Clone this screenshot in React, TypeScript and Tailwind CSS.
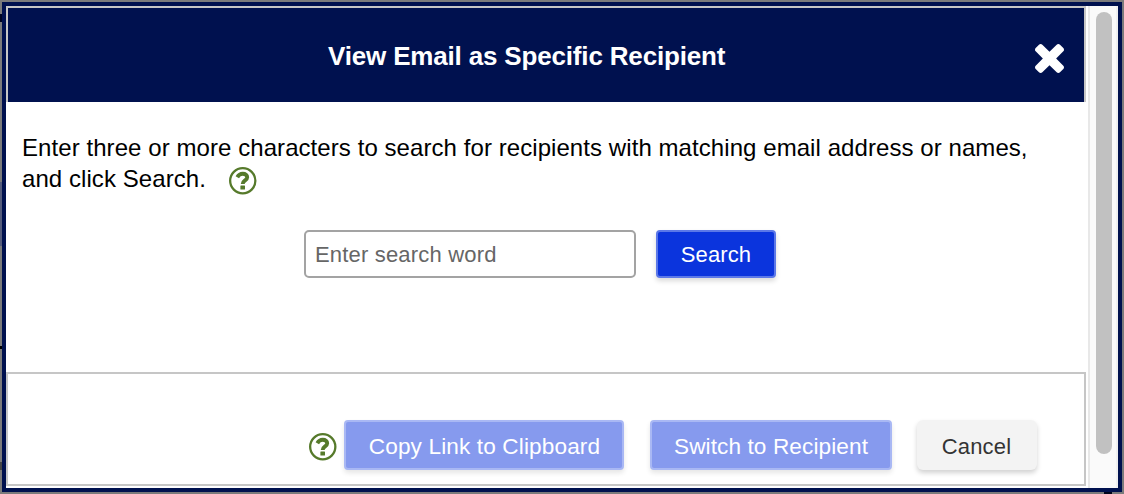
import React from "react";

function HelpIcon() {
  return (
    <svg viewBox="0 0 27.5 27.5" className="h-[27.5px] w-[27.5px] shrink-0" aria-label="Help">
      <circle cx="13.75" cy="13.75" r="12.6" fill="none" stroke="#567a2b" strokeWidth="2.3" />
      <path
        d="M8.3 10.3C9.6 7.900 11.500 6.800 13.800 6.800C16.500 6.800 18.200 8.300 18.200 10.300C18.200 13.500 13.700 13.300 13.700 17"
        fill="none"
        stroke="#567a2b"
        strokeWidth="3.9"
      />
      <rect x="11.4" y="18.4" width="4.6" height="4" rx="0.5" fill="#567a2b" />
    </svg>
  );
}

function CloseIcon() {
  return (
    <svg viewBox="302 366 1188 1188" className="h-[29px] w-[29px]" fill="white">
      <path d="M1490 1322q0 40-28 68l-136 136q-28 28-68 28t-68-28l-294-294-294 294q-28 28-68 28t-68-28l-136-136q-28-28-28-68t28-68l294-294-294-294q-28-28-28-68t28-68l136-136q28-28 68-28t68 28l294 294 294-294q28-28 68-28t68 28l136 136q28 28 28 68t-28 68l-294 294 294 294q28 28 28 68z" />
    </svg>
  );
}

export default function App() {
  return (
    <div className="flex h-[494px] w-[1124px] bg-[#7b7b7b] pr-0.5 font-['Liberation_Sans',Arial,sans-serif]">
      {/* Dimmed page showing beside the dialog */}
      <div className="flex w-0.5 flex-col">
        <div className="mt-3.5 h-2 bg-[#000524]" />
        <div className="mt-[160px] h-16 bg-[#555c7c]" />
        <div className="mt-[100px] h-[3px] bg-black" />
        <div className="mt-[113px] h-2 bg-[#454545]" />
      </div>
      <div className="flex w-[1120px] flex-col pt-0.5">
        <div className="flex h-[490px] shrink-0 border-4 border-[#00114f] bg-white">
          <div className="mr-0.5 flex w-[1080px] flex-col">
            <header className="flex h-24 items-start border-2 border-b-0 border-[#c6c6c6] bg-[#00114f]">
              <h1 className="w-[1027px] pt-8 pl-[320px] text-[26px] leading-8 font-bold tracking-[-0.17px] whitespace-nowrap text-white">
                View Email as Specific Recipient
              </h1>
              <button className="mt-9" aria-label="Close">
                <CloseIcon />
              </button>
            </header>
            <main className="flex h-[270px] flex-col pt-[30px] pl-4 text-black">
              <p className="text-2xl leading-8 tracking-[0.07px] whitespace-nowrap">
                Enter three or more characters to search for recipients with matching email address or names,
              </p>
              <div className="flex h-8 items-start">
                <p className="-mt-px w-[207px] text-2xl leading-8 tracking-[0.07px] whitespace-nowrap">and click Search.</p>
                <div className="pt-[3px]">
                  <HelpIcon />
                </div>
              </div>
              <div className="mt-[34px] ml-[282px] flex gap-5">
                <input
                  placeholder="Enter search word"
                  className="h-12 w-[332px] rounded-[5px] border-2 border-[#a3a3a3] bg-white px-[9px] pt-0.5 text-[22px] tracking-[0.18px] placeholder:text-[#666]"
                />
                <button className="h-12 w-[120px] rounded-[4px] border-2 border-[#5c78e8] bg-[#0b34dd] text-[22px] tracking-[0.1px] text-white shadow-[0_3px_5px_rgba(0,0,0,0.15)]">
                  Search
                </button>
              </div>
            </main>
            <footer className="flex h-[114px] items-start border-2 border-[#c6c6c6] pt-[46px] pl-[301px]">
              <div className="mr-[7.5px] pt-[13px]">
                <HelpIcon />
              </div>
              <button className="h-[50px] w-[280px] rounded-[4px] border-2 border-[#a9b8f4] bg-[#869aee] pt-1 pl-px text-[22.6px] leading-7 tracking-[0.13px] whitespace-nowrap text-white shadow-[0_3px_5px_rgba(0,0,0,0.1)]">
                Copy Link to Clipboard
              </button>
              <button className="ml-[26px] h-[50px] w-[242px] rounded-[4px] border-2 border-[#a9b8f4] bg-[#869aee] pt-1 text-[22.6px] leading-7 tracking-[0.1px] whitespace-nowrap text-white shadow-[0_3px_5px_rgba(0,0,0,0.1)]">
                Switch to Recipient
              </button>
              <button className="ml-[25px] h-[50px] w-[120px] rounded-[6px] bg-[#f3f3f3] pt-0.5 pr-px text-[22px] tracking-[0.15px] text-[#333] shadow-[0_3px_5px_rgba(0,0,0,0.18)]">
                Cancel
              </button>
            </footer>
          </div>
          <div className="flex w-[30px] border-r-2 border-l-2 border-l-[#e8e8e8] border-r-[#f0f0f0] bg-[#fafafa] pt-1.5 pl-1.5">
            <div className="h-[442px] w-4 rounded-full bg-[#c1c1c1]" />
          </div>
        </div>
        <div className="ml-[1102px] h-0.5 w-2 bg-[#00051c]" />
      </div>
    </div>
  );
}
